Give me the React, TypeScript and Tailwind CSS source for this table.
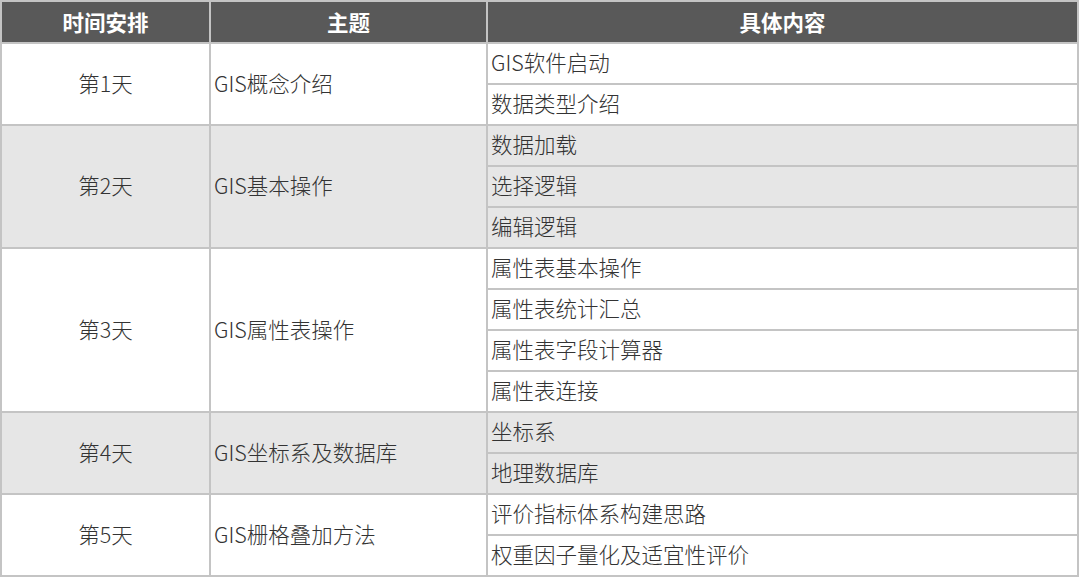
const days = [
  { day: "第1天", topic: "GIS概念介绍", items: ["GIS软件启动", "数据类型介绍"] },
  { day: "第2天", topic: "GIS基本操作", items: ["数据加载", "选择逻辑", "编辑逻辑"] },
  {
    day: "第3天",
    topic: "GIS属性表操作",
    items: ["属性表基本操作", "属性表统计汇总", "属性表字段计算器", "属性表连接"],
  },
  { day: "第4天", topic: "GIS坐标系及数据库", items: ["坐标系", "地理数据库"] },
  { day: "第5天", topic: "GIS栅格叠加方法", items: ["评价指标体系构建思路", "权重因子量化及适宜性评价"] },
];

export default function App() {
  return (
    <main
      className="w-[1080px] h-[578px] bg-white overflow-hidden text-[#333]"
      style={{ fontFamily: '"Noto Sans CJK SC", "Noto Sans", sans-serif' }}
    >
      <table className="w-[1079px] border-collapse table-fixed text-[21.5px] leading-none font-light">
        <colgroup>
          <col className="w-[209px]" />
          <col className="w-[277px]" />
          <col />
        </colgroup>
        <thead>
          <tr className="h-[42px] bg-[#595959] text-white">
            <th className="border-2 border-[#c4c4c4] font-bold">时间安排</th>
            <th className="border-2 border-[#c4c4c4] font-bold">主题</th>
            <th className="border-2 border-[#c4c4c4] font-bold">具体内容</th>
          </tr>
        </thead>
        <tbody>
          {days.map((d, i) => {
            const bg = i % 2 === 1 ? "bg-[#e6e6e6]" : "bg-white";
            return d.items.map((item, j) => (
              <tr key={d.day + j} className={`h-[41px] ${bg}`}>
                {j === 0 && (
                  <>
                    <td rowSpan={d.items.length} className="border-2 border-[#c4c4c4] text-center pb-[3px]">
                      {d.day}
                    </td>
                    <td rowSpan={d.items.length} className="border-2 border-[#c4c4c4] pl-[3px] pb-[3px]">
                      {d.topic}
                    </td>
                  </>
                )}
                <td className="border-2 border-[#c4c4c4] pl-[3px] pb-[3px]">{item}</td>
              </tr>
            ));
          })}
        </tbody>
      </table>
    </main>
  );
}
